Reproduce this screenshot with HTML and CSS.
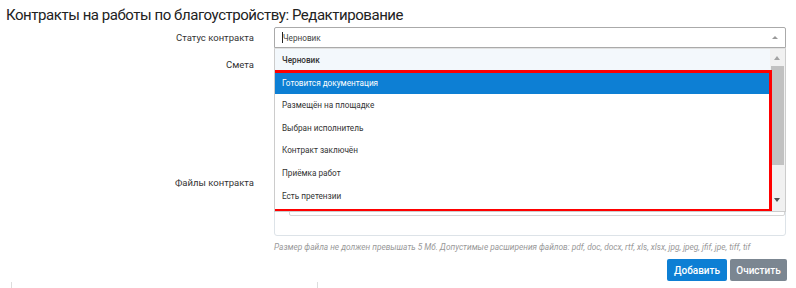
FILE: index.html
```html
<!DOCTYPE html>
<html>

<head>
	<title>Контракты на работы по благоустройству</title>
	<meta name="viewport" content="width=device-width, initial-scale=1">
	<link rel="stylesheet" href="styles.css">
</head>

<body>
	<h1 class="page-title">Контракты на работы по благоустройству: Редактирование</h1>

	<form class="form" action="">
		<label class="form-label" for="status">Статус контракта</label>
		<div class="field">
			<div class="select open" id="status">
				<span class="select-value"><span class="caret"></span>Черновик</span>
				<span class="select-arrow"></span>
				<div class="dropdown">
					<ul class="options">
						<li class="option selected">Черновик</li>
						<li class="option active">Готовится документация</li>
						<li class="option">Размещён на площадке</li>
						<li class="option">Выбран исполнитель</li>
						<li class="option">Контракт заключён</li>
						<li class="option">Приёмка работ</li>
						<li class="option">Есть претензии</li>
					</ul>
					<div class="scrollbar">
						<span class="scroll-up"></span>
						<span class="scroll-thumb"></span>
						<span class="scroll-down"></span>
					</div>
					<div class="highlight"></div>
				</div>
			</div>
		</div>

		<label class="form-label label-top">Смета</label>
		<div class="field">
			<div class="upload small"></div>
		</div>

		<label class="form-label">Файлы контракта</label>
		<div class="field">
			<div class="upload files">
				<div class="upload-inner"></div>
			</div>
		</div>

		<div></div>
		<div class="field">
			<p class="hint">Размер файла не должен превышать 5 Мб. Допустимые расширения файлов: pdf, doc, docx, rtf, xls, xlsx, jpg, jpeg, jfif, jpe, tiff, tif</p>
			<div class="buttons">
				<button type="button" class="btn btn-primary">Добавить</button>
				<button type="button" class="btn btn-secondary">Очистить</button>
			</div>
		</div>
	</form>

	<div class="table-top">
		<span class="col-line"></span>
		<span class="col-line"></span>
	</div>
</body>

</html>
```

FILE: styles.css
```css
body {
	margin: 0;
	font-family: 'Roboto', 'Liberation Sans', sans-serif;
	color: #333;
	background: #fff;
}

.page-title {
	margin: 0;
	padding: 5px 0 0 6px;
	font-size: 15px;
	line-height: 20px;
	letter-spacing: -0.45px;
	font-weight: 400;
	color: #222;
}

.form {
	display: grid;
	grid-template-columns: 274px 512px;
	row-gap: 4px;
	margin-top: 2px;
}

.form-label {
	display: flex;
	align-items: center;
	justify-content: flex-end;
	padding-right: 20px;
	font-size: 9.5px;
	color: #333;
}

.label-top {
	align-items: flex-start;
	padding-top: 7px;
}

.field {
	position: relative;
}

.select {
	position: relative;
	height: 21px;
	box-sizing: border-box;
	border: 1px solid #aaa;
	border-radius: 2px 2px 0 0;
	background: #fff;
	z-index: 5;
}

.select-value {
	display: flex;
	align-items: center;
	height: 100%;
	padding-left: 7px;
	font-size: 8.2px;
	color: #444;
}

.caret {
	width: 1px;
	height: 11px;
	background: #222;
}

.select-arrow {
	position: absolute;
	right: 7px;
	top: 8px;
	border-left: 3px solid transparent;
	border-right: 3px solid transparent;
	border-bottom: 3px solid #999;
}

.dropdown {
	position: absolute;
	top: 20px;
	left: -1px;
	width: 512px;
	height: 164px;
	box-sizing: border-box;
	border: 1px solid #ccc;
	border-top-color: #e2e2e2;
	background: #fff;
	display: flex;
	overflow: hidden;
}

.options {
	list-style: none;
	margin: 0;
	padding: 0;
	flex: 1;
}

.option {
	height: 22.6px;
	line-height: 22.6px;
	padding-left: 7px;
	font-size: 8.2px;
	color: #333;
}

.option.selected {
	background: #f3f8fc;
	font-weight: 500;
}

.option.active {
	background: #0d7fd4;
	color: #fff;
}

.scrollbar {
	width: 15px;
	background: #f1f1f1;
	position: relative;
}

.scroll-up,
.scroll-down {
	position: absolute;
	left: 4px;
	border-left: 3.5px solid transparent;
	border-right: 3.5px solid transparent;
}

.scroll-up {
	top: 7px;
	border-bottom: 4px solid #a3a3a3;
}

.scroll-down {
	bottom: 9px;
	border-top: 4px solid #505050;
}

.scroll-thumb {
	position: absolute;
	top: 17px;
	left: 1px;
	width: 13px;
	height: 99px;
	background: #c1c1c1;
}

.highlight {
	position: absolute;
	left: -3px;
	top: 21px;
	width: 500px;
	height: 142px;
	box-sizing: border-box;
	border: 3px solid #f00;
}

.upload {
	box-sizing: border-box;
	border: 1px solid #dde3e8;
	border-radius: 3px;
}

.upload.small {
	height: 72px;
}

.upload.files {
	height: 108px;
	padding: 10px 0 0 14px;
}

.upload-inner {
	height: 75px;
	border: 1px solid #d6d6d6;
	border-radius: 2px;
}

.hint {
	margin: 2px 0 0 0;
	font-size: 8.3px;
	font-style: italic;
	color: #999;
	line-height: 11px;
}

.buttons {
	display: flex;
	justify-content: flex-end;
	gap: 3px;
	margin-top: 6px;
	margin-right: -1px;
}

.btn {
	height: 22px;
	border: none;
	border-radius: 2px;
	padding: 0 6px;
	font-family: 'Roboto', 'Liberation Sans', sans-serif;
	font-size: 10px;
	font-weight: 500;
	color: #fff;
	cursor: pointer;
}

.btn-primary {
	background: #0d7fd4;
	width: 60px;
}

.btn-secondary {
	background: #7b8691;
	width: 57px;
}

.table-top {
	display: flex;
	gap: 305px;
	padding-left: 11px;
	margin-top: 1px;
}

.col-line {
	width: 1px;
	height: 6px;
	background: #ddd;
}
```
